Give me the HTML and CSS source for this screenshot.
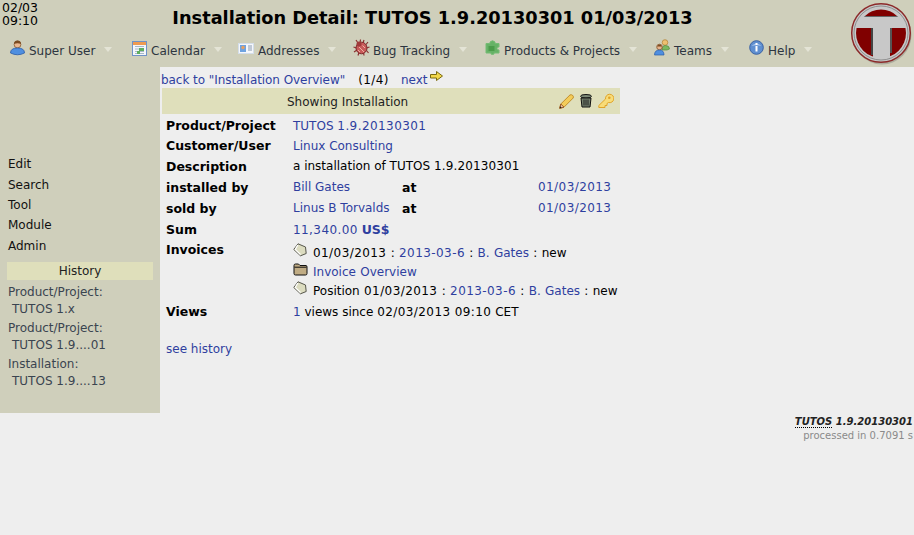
FILE: index.html
```html
<!DOCTYPE html>
<html lang="en">
<head>
<meta charset="utf-8">
<title>Installation Detail</title>
<link rel="stylesheet" href="styles.css">
</head>
<body>
<svg class="defs" width="0" height="0" aria-hidden="true">
  <defs>
    <g id="tag">
      <path d="M5 .8 L12.5 4 L13.200 10.500 L7.500 12.800 L.8 6.500 Z" fill="#dcdcc0" stroke="#55554a" stroke-width="1"/>
      <path d="M4.800 2 L2.300 6.500 L7.500 11.500" fill="none" stroke="#fff" stroke-width="1.200"/>
    </g>
  </defs>
</svg>
<header class="top">
  <div class="title-row">
    <div class="clock">02/03<br>09:10</div>
    <h1 class="title">Installation Detail: TUTOS 1.9.20130301 01/03/2013</h1>
  </div>
  <nav class="menu">
    <a class="menu-item mi-user"><svg class="mi" width="15" height="16" viewBox="0 0 15 16"><circle cx="7.500" cy="4.500" r="3.400" fill="#eab890" stroke="#8a5a30" stroke-width=".8"/><path d="M4 4 Q4 .5 7.500 .5 Q11 .5 11 4 Q7.500 2.500 4 4Z" fill="#7a4a20"/><path d="M.5 13 Q.5 8 7.500 8 Q14.500 8 14.500 13 Q7.500 16.500 .5 13Z" fill="#4f8fe0" stroke="#2a5ba8" stroke-width=".8"/></svg><span>Super User</span><i class="caret"></i></a>
    <a class="menu-item mi-cal"><svg class="mi" width="15" height="15" viewBox="0 0 15 15"><rect x=".5" y=".5" width="14" height="14" fill="#f4f6fa" stroke="#6f93c8"/><rect x="1" y="1" width="13" height="3" fill="#ee9a50"/><path d="M3 5.500h9M3 8h9M3 10.500h9M3 12.500h9" stroke="#a8b8c8"/><rect x="7" y="7" width="5" height="3" fill="#5fae5f"/><rect x="5" y="10" width="3" height="3" fill="#5fae5f"/></svg><span>Calendar</span><i class="caret"></i></a>
    <a class="menu-item mi-addr"><svg class="mi" width="16" height="11" viewBox="0 0 16 11"><rect x=".5" y=".5" width="15" height="10" fill="#f5f7fb" stroke="#d4deea"/><rect x="2" y="2" width="6" height="7" fill="#6fa3e0"/><circle cx="5" cy="4.500" r="1.700" fill="#e8a060"/><path d="M10 3h4M10 5h4M10 7h4" stroke="#8a9ab0"/></svg><span>Addresses</span><i class="caret"></i></a>
    <a class="menu-item mi-bug"><svg class="mi" width="17" height="17" viewBox="0 0 17 17"><path d="M3 1l2 3M7.500 .5 7 4M11 1l-1 3M.5 8l3 1M1 13l3-2M5 16.500l1-3M11 16.500l-.5-3M15.500 14l-2-2.500M16.500 8l-3 1M15 3l-2 2.500" stroke="#8a2f2f" stroke-width="1.200"/><ellipse cx="8.500" cy="9" rx="5.500" ry="5.800" fill="#c85a5a" stroke="#7c2828"/><circle cx="6" cy="5" r="2.500" fill="#a03a3a"/><path d="M6 8l5 5M9.500 6.500l2.500 2.500M5 11l2 2" stroke="#efb0a0"/></svg><span>Bug Tracking</span><i class="caret"></i></a>
    <a class="menu-item mi-prod"><svg class="mi" width="15" height="15" viewBox="0 0 15 15"><path d="M5 3.500 V2 Q7.500 -.5 10 2 V3.500 H14 V7 Q12 6.500 12 8.500 Q12 10 14 10 V13 H9 Q9.500 14.500 7.500 14.500 Q5.500 14.500 6 13 H1 V3.500Z" fill="#66b266" stroke="#74bc74"/><rect x="3.500" y="6" width="6" height="5" fill="#4a9c4a"/></svg><span>Products &amp; Projects</span><i class="caret"></i></a>
    <a class="menu-item mi-team"><svg class="mi" width="17" height="17" viewBox="0 0 17 17"><circle cx="11" cy="3.500" r="2.800" fill="#eec070" stroke="#b08030" stroke-width=".7"/><path d="M8 11 Q8 6.500 11.500 6.500 Q15.500 6.500 15.500 10 L13 11Z" fill="#7cb860" stroke="#558a3c" stroke-width=".7"/><circle cx="5.500" cy="8" r="2.800" fill="#e8b48c" stroke="#7a4a20" stroke-width=".7"/><path d="M3 7.500 Q5.500 3.500 8 7.500Z" fill="#7a4a20"/><path d="M.5 16 Q.5 11 5.500 11 Q10 11 10 16Z" fill="#4f8fe0" stroke="#2a5ba8" stroke-width=".7"/></svg><span>Teams</span><i class="caret"></i></a>
    <a class="menu-item mi-help"><svg class="mi" width="15" height="15" viewBox="0 0 15 15"><circle cx="7.500" cy="7.500" r="6.800" fill="#5f8fd0" stroke="#3a62a4"/><path d="M2.500 6 Q7.500 1 12.500 6 Q7.500 4.500 2.500 6Z" fill="#a8c4ec"/><rect x="6.500" y="3" width="2" height="2" fill="#fff"/><rect x="6.500" y="6" width="2" height="5.500" fill="#fff"/></svg><span>Help</span><i class="caret"></i></a>
  </nav>
  <svg class="logo" width="64" height="64" viewBox="0 0 64 64">
    <defs>
      <clipPath id="logoclip"><circle cx="31" cy="31" r="25"/></clipPath>
      <clipPath id="capclip"><circle cx="31" cy="31" r="23.500"/></clipPath>
    </defs>
    <circle cx="32" cy="33" r="29.500" fill="#8a8a80" opacity=".5"/>
    <circle cx="31" cy="31" r="29.300" fill="#c6c6c6" stroke="#8c2a2a" stroke-width="1.500"/>
    <circle cx="31" cy="31" r="27" fill="#c8c8c8" stroke="#8f8f8f"/>
    <g clip-path="url(#capclip)">
      <rect x="4" y="6" width="54" height="8" fill="#800000"/>
      <rect x="4" y="14" width="54" height="1" fill="#666"/>
    </g>
    <g clip-path="url(#logoclip)">
      <rect x="4" y="26" width="19" height="34" fill="#800000"/>
      <rect x="40" y="26" width="18" height="34" fill="#800000"/>
      <rect x="21" y="26" width="2" height="27" fill="#444"/>
      <rect x="40" y="26" width="2" height="25" fill="#555"/>
    </g>
  </svg>
</header>
<div class="layout">
  <aside class="side">
    <ul class="side-links">
      <li>Edit</li>
      <li>Search</li>
      <li>Tool</li>
      <li>Module</li>
      <li>Admin</li>
    </ul>
    <div class="hist-title">History</div>
    <div class="hist">Product/Project:<span class="hist-val">TUTOS 1.x</span></div>
    <div class="hist">Product/Project:<span class="hist-val">TUTOS 1.9....01</span></div>
    <div class="hist">Installation:<span class="hist-val">TUTOS 1.9....13</span></div>
  </aside>
  <main class="main">
    <div class="pager">
      <a class="link back">back to "Installation Overview"</a>
      <span class="count num">(1/4)</span>
      <a class="link next">next</a><svg class="arrow" width="13" height="11" viewBox="0 0 13 11"><path d="M.5 3.500H6.500V.5L12.500 5 6.500 9.500V7H.5Z" fill="#f3d84a" stroke="#7a6a10"/></svg>
    </div>
    <div class="panel">
      <div class="panel-head">
        <span class="panel-title">Showing Installation</span>
        <span class="tools">
          <svg width="15" height="15" viewBox="0 0 15 15"><path d="M.7 14.300 L1.800 10 L11 .9 Q12.500 .3 13.800 1.500 Q14.800 2.800 14.200 4 L5 13.200Z" fill="#f3cc5a" stroke="#c08e2c"/><path d="M.7 14.300 L1.800 10 L5 13.200Z" fill="#f0c8a0" stroke="#9a5a2a"/><path d="M.7 14.300 L1.200 12.300 L2.700 13.800Z" fill="#222"/></svg>
          <svg width="12" height="14" viewBox="0 0 12 14"><ellipse cx="6" cy="2.300" rx="5.500" ry="1.800" fill="#7d8a78" stroke="#111"/><path d="M1 4 L2 13 H10 L11 4Z" fill="#75816f" stroke="#111"/><path d="M4 5.500V11.500M6 5.500V11.500M8 5.500V11.500" stroke="#222"/></svg>
          <svg width="16" height="16" viewBox="0 0 16 16"><path d="M.8 12.500 L7.500 6 A4.200 4.200 0 1 1 10.500 9.500 L9 10.500 V12.500 H7 V14.500 H3 L.8 14.500Z" fill="#f8dc78" stroke="#e0a428"/><circle cx="11.300" cy="4.700" r="1.300" fill="#e0a428"/></svg>
        </span>
      </div>
      <div class="details">
        <div class="row row-1"><b class="lbl">Product/Project</b><a class="link">TUTOS <span class="num">1.9.20130301</span></a></div>
        <div class="row row-2"><b class="lbl">Customer/User</b><a class="link">Linux Consulting</a></div>
        <div class="row row-3"><b class="lbl">Description</b><span>a installation of TUTOS <span class="num">1.9.20130301</span></span></div>
        <div class="row row-4"><b class="lbl">installed by</b><a class="link name">Bill Gates</a><b class="at">at</b><a class="link num">01/03/2013</a></div>
        <div class="row row-5"><b class="lbl">sold by</b><a class="link name">Linus B Torvalds</a><b class="at">at</b><a class="link num">01/03/2013</a></div>
        <div class="row row-6"><b class="lbl">Sum</b><a class="link"><span class="num">11,340.00</span> <b class="lbl">US$</b></a></div>
        <div class="row row-inv"><b class="lbl">Invoices</b>
          <div class="inv">
            <div class="inv-line"><svg class="ico" width="15" height="15" viewBox="0 0 15 15"><use href="#tag"/></svg><span class="num">01/03/2013</span> : <a class="link num">2013-03-6</a> : <a class="link">B. Gates</a> : new</div>
            <div class="inv-line"><svg class="ico" width="15" height="13" viewBox="0 0 15 13"><path d="M1 2.500 Q1 1 2.500 1 H5.500 L7 2.500 H13 Q14 2.500 14 4 V10.500 Q14 12 12.500 12 H2.500 Q1 12 1 10.500Z" fill="#c0ac84" stroke="#111"/><path d="M1.500 4.200H13.500" stroke="#111"/></svg><a class="link">Invoice Overview</a></div>
            <div class="inv-line"><svg class="ico" width="15" height="15" viewBox="0 0 15 15"><use href="#tag"/></svg>Position <span class="num">01/03/2013</span> : <a class="link num">2013-03-6</a> : <a class="link">B. Gates</a> : new</div>
          </div>
        </div>
        <div class="row row-views"><b class="lbl">Views</b><span><a class="link">1</a> views since <span class="num">02/03/2013 09:10</span> CET</span></div>
      </div>
      <a class="link history">see history</a>
    </div>
  </main>
</div>
<footer class="foot">
  <div class="ver"><span class="ver-name">TUTOS</span> 1.9.20130301</div>
  <div class="proc">processed in 0.7091 s</div>
</footer>
</body>
</html>
```

FILE: styles.css
```css
* { box-sizing: border-box; }
html, body { margin: 0; padding: 0; }
body {
  width: 914px;
  height: 535px;
  overflow: hidden;
  background: #eeeeee;
  color: #000;
  font-family: "DejaVu Sans", sans-serif;
  font-size: 12px;
  position: relative;
}
.defs { position: absolute; }
.link { color: #2f3f9f; text-decoration: none; }
.num { letter-spacing: .42px; }

.top { height: 67px; background: #cfcfbb; position: relative; }
.title-row { height: 35px; display: flex; }
.clock { width: 60px; padding: 1px 0 0 2px; font-size: 12.5px; line-height: 13px; }
.title {
  margin: 0;
  width: 745px;
  padding-top: 7px;
  text-align: center;
  font-size: 17.750px;
  line-height: 22px;
  font-weight: bold;
}
.menu { display: flex; align-items: flex-start; height: 32px; padding: 4px 0 0 10px; color: #2d3540; }
.menu-item { display: flex; align-items: flex-start; white-space: nowrap; }
.menu-item span { padding-top: 5px; line-height: 15px; }
.mi { flex: none; margin-right: 4px; }
.caret {
  flex: none;
  width: 0;
  height: 0;
  margin: 8px 0 0 9px;
  border-left: 4.500px solid transparent;
  border-right: 4.500px solid transparent;
  border-top: 5px solid #e4e4d6;
}
.mi-user { width: 122px; }
.mi-user .mi { margin-top: 1px; }
.mi-cal { width: 106px; }
.mi-cal .mi { margin-top: 2px; }
.mi-addr { width: 115px; }
.mi-addr .mi { margin-top: 4px; }
.mi-bug { width: 132px; }
.mi-bug .mi { margin-right: 3px; }
.mi-prod { width: 169px; }
.mi-prod .mi { margin-top: 1px; }
.mi-team { width: 95px; }
.mi-team .mi { margin-right: 3px; }
.mi-help .mi { margin-top: 1px; }
.logo { position: absolute; left: 850px; top: 2px; }

.layout { display: flex; align-items: flex-start; }
.side { width: 160px; height: 346px; background: #cfcfbb; padding: 87.200px 7px 0; color: #3a4450; }
.side-links { list-style: none; margin: 0 0 5.800px; padding: 0 0 0 1px; color: #111; }
.side-links li { height: 20.400px; line-height: 20.400px; }
.hist-title { height: 18px; line-height: 19px; background: #dfdfbb; text-align: center; color: #222; margin-bottom: 4px; }
.hist { line-height: 17px; padding: 0 0 0 1px; height: 36px; }
.hist-val { display: block; padding-left: 4px; }

.main { flex: 1; padding: 4px 0 0 1px; }
.pager { height: 17px; line-height: 19px; white-space: nowrap; display: flex; align-items: flex-start; }
.back { letter-spacing: -.06px; }
.count { margin: 0 12px 0 13px; }
.arrow { margin: 0 0 0 2px; }
.panel { width: 458px; margin-left: 1px; }
.panel-head { height: 26px; background: #dfdfbb; display: flex; align-items: center; color: #222; }
.panel-title { padding: 2px 0 0 125px; }
.tools { margin-left: auto; display: flex; align-items: center; gap: 6px; padding-right: 6px; }
.details { padding: 1px 0 0 4px; }
.row { display: grid; grid-template-columns: 127px 109px 136px auto; align-items: center; height: 21px; white-space: nowrap; }
.row-1, .row-2 { height: 20.300px; }
.row-1 > a, .row-2 > a, .row-views > span { padding-top: 2px; }
.row > span, .row-6 > a { grid-column: 2 / span 3; }
.row-3 .num { letter-spacing: .14px; }
.lbl, .at { font-weight: bold; font-size: 12.500px; }
.row-inv { height: 59px; align-items: start; padding-top: 2px; }
.inv { grid-column: 2 / span 3; margin-top: 2px; }
.inv-line { height: 19px; display: flex; align-items: center; line-height: 19px; white-space: pre; word-spacing: .5px; }
.ico { margin-right: 5px; flex: none; position: relative; top: -3px; }
.row-views { margin-top: 2px; }
.history { display: block; margin: 18px 0 0 4px; line-height: 18px; }

.foot { position: absolute; top: 415px; right: 1px; text-align: right; font-size: 10px; }
.ver { font-weight: bold; font-style: italic; color: #222; line-height: 14px; }
.ver-name { border-bottom: 1px dotted #000; }
.proc { color: #8a8a8a; line-height: 14px; }
```
